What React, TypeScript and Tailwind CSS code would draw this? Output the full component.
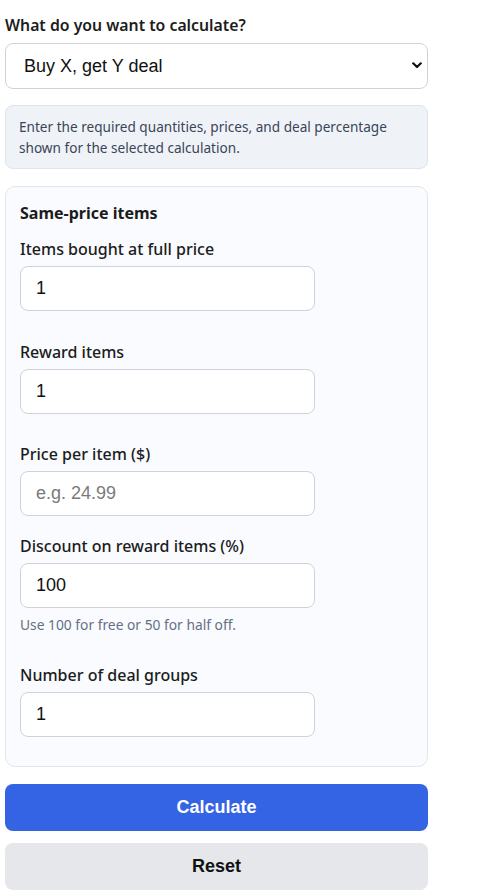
import React, { useState } from "react";

const labelFont = { fontFamily: '"Noto Sans", "Open Sans", sans-serif' };

function Field({
  label,
  value,
  placeholder,
  hint,
  className,
  onChange,
}: {
  label: string;
  value: string;
  placeholder?: string;
  hint?: string;
  className?: string;
  onChange: (v: string) => void;
}) {
  return (
    <div className={className}>
      <label
        className="block text-[16px] font-medium leading-6 text-[#1c1c1c]"
        style={labelFont}
      >
        {label}
      </label>
      <input
        type="text"
        value={value}
        placeholder={placeholder}
        onChange={(e) => onChange(e.target.value)}
        className="mt-[5px] block h-[45px] w-[295px] rounded-lg border border-[#cdd3dc] bg-white px-[15px] text-[18px] text-[#111] placeholder:text-[#7a7a7a] outline-none font-['Liberation_Sans',Arial,sans-serif]"
      />
      {hint && (
        <p
          className="mt-[7px] text-[13.8px] leading-5 text-[#667085]"
          style={labelFont}
        >
          {hint}
        </p>
      )}
    </div>
  );
}

export default function App() {
  const [mode, setMode] = useState("bxgy");
  const [bought, setBought] = useState("1");
  const [reward, setReward] = useState("1");
  const [price, setPrice] = useState("");
  const [discount, setDiscount] = useState("100");
  const [groups, setGroups] = useState("1");

  const reset = () => {
    setBought("1");
    setReward("1");
    setPrice("");
    setDiscount("100");
    setGroups("1");
  };

  return (
    <div className="min-h-screen bg-white px-[5px] pt-[13px]">
      <div className="w-[423px]">
        <label
          className="block text-[15.8px] font-semibold leading-6 text-[#1c1c1c]"
          style={labelFont}
        >
          What do you want to calculate?
        </label>
        <div className="relative mt-[6px]">
          <select
            value={mode}
            onChange={(e) => setMode(e.target.value)}
            className="block h-[46px] w-full appearance-none rounded-lg border border-[#cdd3dc] bg-white pl-[18px] pr-10 text-[18px] text-[#111] outline-none font-['Liberation_Sans',Arial,sans-serif]"
          >
            <option value="bxgy">Buy X, get Y deal</option>
            <option value="pct">Percentage off</option>
          </select>
          <svg
            className="pointer-events-none absolute right-[6px] top-[19px]"
            width="10"
            height="7"
            viewBox="0 0 10 7"
            fill="none"
          >
            <path
              d="M1.2 1.3 L5 5 L8.8 1.3"
              stroke="#111"
              strokeWidth="2.2"
              strokeLinecap="round"
              strokeLinejoin="round"
            />
          </svg>
        </div>

        <div
          className="mt-4 rounded-lg border border-[#dfe4eb] bg-[#eff3f8] px-[13px] py-[10px] text-[13.6px] leading-[21px] text-[#3a4556]"
          style={labelFont}
        >
          Enter the required quantities, prices, and deal percentage shown for
          the selected calculation.
        </div>

        <div className="mt-[17px] rounded-[10px] border border-[#e1e6ed] bg-[#f9fbfe] px-[14px] pb-[29px] pt-[14px]">
          <h2
            className="text-[16px] font-bold leading-6 text-[#1c1c1c]"
            style={labelFont}
          >
            Same-price items
          </h2>
          <Field
            className="mt-3"
            label="Items bought at full price"
            value={bought}
            onChange={setBought}
          />
          <Field
            className="mt-[29px]"
            label="Reward items"
            value={reward}
            onChange={setReward}
          />
          <Field
            className="mt-[28px]"
            label="Price per item ($)"
            value={price}
            placeholder="e.g. 24.99"
            onChange={setPrice}
          />
          <Field
            className="mt-[18px]"
            label="Discount on reward items (%)"
            value={discount}
            hint="Use 100 for free or 50 for half off."
            onChange={setDiscount}
          />
          <Field
            className="mt-[28px]"
            label="Number of deal groups"
            value={groups}
            onChange={setGroups}
          />
        </div>

        <button
          type="button"
          className="mt-[17px] block h-[47px] w-full rounded-lg bg-[#3463e4] text-[18px] font-bold text-white font-['Liberation_Sans',Arial,sans-serif]"
        >
          Calculate
        </button>
        <button
          type="button"
          onClick={reset}
          className="mt-3 block h-[47px] w-full rounded-lg bg-[#e5e7eb] text-[18px] font-bold text-[#111] font-['Liberation_Sans',Arial,sans-serif]"
        >
          Reset
        </button>
      </div>
    </div>
  );
}
